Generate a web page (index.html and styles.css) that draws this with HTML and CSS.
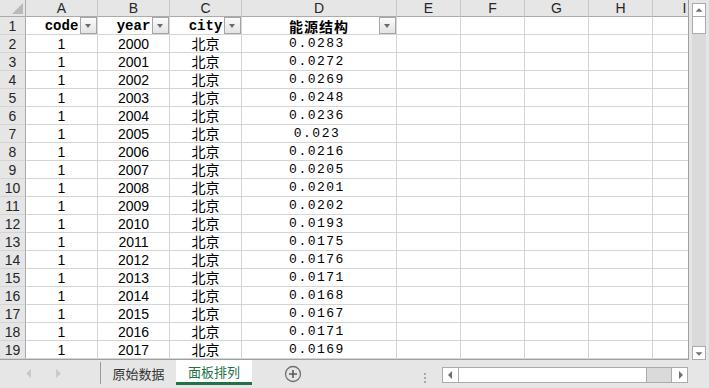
FILE: index.html
```html
<!DOCTYPE html>
<html>
<head>
  <title>面板排列</title>
  <link rel="stylesheet" href="styles.css">
</head>
<body>

  <div class="main">
    <div class="sheet">
      <div class="row cols">
        <span class="corner"><svg width="11" height="11" viewBox="0 0 11 11"><polygon points="11,0 11,11 0,11" fill="#b9b9b9"/></svg></span>
        <span>A</span><span>B</span><span>C</span><span>D</span><span>E</span><span>F</span><span>G</span><span>H</span><span>I</span>
      </div>
      <div class="row head">
        <span class="rh">1</span>
        <span class="mono">code<b class="filter"></b></span>
        <span class="mono">year<b class="filter"></b></span>
        <span class="mono">city<b class="filter"></b></span>
        <span class="cjk-bold">能源结构<b class="filter"></b></span>
        <i></i><i></i><i></i><i></i><i></i>
      </div>
      <div class="row"><span class="rh">2</span><span>1</span><span>2000</span><span class="cjk">北京</span><span class="num">0.0283</span><i></i><i></i><i></i><i></i><i></i></div>
      <div class="row"><span class="rh">3</span><span>1</span><span>2001</span><span class="cjk">北京</span><span class="num">0.0272</span><i></i><i></i><i></i><i></i><i></i></div>
      <div class="row"><span class="rh">4</span><span>1</span><span>2002</span><span class="cjk">北京</span><span class="num">0.0269</span><i></i><i></i><i></i><i></i><i></i></div>
      <div class="row"><span class="rh">5</span><span>1</span><span>2003</span><span class="cjk">北京</span><span class="num">0.0248</span><i></i><i></i><i></i><i></i><i></i></div>
      <div class="row"><span class="rh">6</span><span>1</span><span>2004</span><span class="cjk">北京</span><span class="num">0.0236</span><i></i><i></i><i></i><i></i><i></i></div>
      <div class="row"><span class="rh">7</span><span>1</span><span>2005</span><span class="cjk">北京</span><span class="num">0.023</span><i></i><i></i><i></i><i></i><i></i></div>
      <div class="row"><span class="rh">8</span><span>1</span><span>2006</span><span class="cjk">北京</span><span class="num">0.0216</span><i></i><i></i><i></i><i></i><i></i></div>
      <div class="row"><span class="rh">9</span><span>1</span><span>2007</span><span class="cjk">北京</span><span class="num">0.0205</span><i></i><i></i><i></i><i></i><i></i></div>
      <div class="row"><span class="rh">10</span><span>1</span><span>2008</span><span class="cjk">北京</span><span class="num">0.0201</span><i></i><i></i><i></i><i></i><i></i></div>
      <div class="row"><span class="rh">11</span><span>1</span><span>2009</span><span class="cjk">北京</span><span class="num">0.0202</span><i></i><i></i><i></i><i></i><i></i></div>
      <div class="row"><span class="rh">12</span><span>1</span><span>2010</span><span class="cjk">北京</span><span class="num">0.0193</span><i></i><i></i><i></i><i></i><i></i></div>
      <div class="row"><span class="rh">13</span><span>1</span><span>2011</span><span class="cjk">北京</span><span class="num">0.0175</span><i></i><i></i><i></i><i></i><i></i></div>
      <div class="row"><span class="rh">14</span><span>1</span><span>2012</span><span class="cjk">北京</span><span class="num">0.0176</span><i></i><i></i><i></i><i></i><i></i></div>
      <div class="row"><span class="rh">15</span><span>1</span><span>2013</span><span class="cjk">北京</span><span class="num">0.0171</span><i></i><i></i><i></i><i></i><i></i></div>
      <div class="row"><span class="rh">16</span><span>1</span><span>2014</span><span class="cjk">北京</span><span class="num">0.0168</span><i></i><i></i><i></i><i></i><i></i></div>
      <div class="row"><span class="rh">17</span><span>1</span><span>2015</span><span class="cjk">北京</span><span class="num">0.0167</span><i></i><i></i><i></i><i></i><i></i></div>
      <div class="row"><span class="rh">18</span><span>1</span><span>2016</span><span class="cjk">北京</span><span class="num">0.0171</span><i></i><i></i><i></i><i></i><i></i></div>
      <div class="row"><span class="rh">19</span><span>1</span><span>2017</span><span class="cjk">北京</span><span class="num">0.0169</span><i></i><i></i><i></i><i></i><i></i></div>
    </div>

    <div class="vscroll">
      <div class="sbtn"><svg width="14" height="13" viewBox="0 0 14 13"><polygon points="3,8 11,8 7,4" fill="#6f6f6f"/></svg></div>
      <div class="vthumb"></div>
      <div class="vtrack"></div>
      <div class="sbtn"><svg width="14" height="13" viewBox="0 0 14 13"><polygon points="3,5 11,5 7,9" fill="#6f6f6f"/></svg></div>
    </div>
  </div>

  <div class="tabbar">
    <div class="nav">
      <svg width="6" height="9" viewBox="0 0 6 9"><polygon points="5,0 5,9 0,4.5" fill="#c9c9c9"/></svg>
      <svg width="6" height="9" viewBox="0 0 6 9"><polygon points="1,0 1,9 6,4.5" fill="#c9c9c9"/></svg>
    </div>
    <div class="tab first">原始数据</div>
    <div class="tab active">面板排列</div>
    <div class="add">
      <svg width="18" height="18" viewBox="0 0 18 18">
        <circle cx="9" cy="9" r="7.5" fill="none" stroke="#707070" stroke-width="1.3"/>
        <path d="M9 5v8M5 9h8" stroke="#5a5a5a" stroke-width="1.6"/>
      </svg>
    </div>
    <div class="spacer"></div>
    <div class="dots">
      <svg width="3" height="11" viewBox="0 0 3 11"><rect x="0" y="0" width="2" height="2" fill="#a9a9a9"/><rect x="0" y="4" width="2" height="2" fill="#a9a9a9"/><rect x="0" y="8" width="2" height="2" fill="#a9a9a9"/></svg>
    </div>
    <div class="hscroll">
      <div class="hbtn"><svg width="14" height="14" viewBox="0 0 14 14"><polygon points="8,3 8,11 4,7" fill="#6f6f6f"/></svg></div>
      <div class="hthumb"></div>
      <div class="htrack"></div>
      <div class="hbtn"><svg width="14" height="14" viewBox="0 0 14 14"><polygon points="6,3 6,11 10,7" fill="#6f6f6f"/></svg></div>
    </div>
  </div>

</body>
</html>
```

FILE: styles.css
```css
* {
  box-sizing: border-box;
}

body {
  margin: 0;
  width: 709px;
  height: 388px;
  overflow: hidden;
  background-color: #e6e6e6;
  font-family: "Liberation Sans", Arial, sans-serif;
}

.main {
  display: flex;
  height: 360px;
}

/* grid of cells */
.sheet {
  width: 689px;
  height: 360px;
  overflow: hidden;
  background-color: white;
  border-right: 1px solid #a0a0a0;
  border-bottom: 1px solid #a0a0a0;
}

.row {
  display: grid;
  grid-template-columns: 26px 72px 72px 72px 155px 64px 64px 64px 64px 64px;
  height: 18px;
}

.row > * {
  position: relative;
  display: flex;
  align-items: center;
  justify-content: center;
  border-right: 1px solid #d4d4d4;
  border-bottom: 1px solid #d4d4d4;
  font-size: 14px;
  line-height: 16px;
  font-style: normal;
  color: #000;
  white-space: nowrap;
}

.cols {
  height: 17px;
  background-color: #e6e6e6;
}

.cols > * {
  border-right-color: #c8c8c8;
  border-bottom-color: #ababab;
  color: #262626;
}

.corner {
  align-items: flex-end !important;
  justify-content: flex-end !important;
  padding: 0 2px 2px 0;
  border-right-color: #ababab !important;
}

.rh {
  background-color: #e6e6e6;
  border-right-color: #ababab !important;
  color: #262626 !important;
}

.mono {
  font-family: "Liberation Mono", monospace;
  font-weight: bold;
  font-size: 14px;
}

.cjk {
  font-family: "Noto Sans CJK SC", sans-serif;
  padding-bottom: 1px;
}

.cjk-bold {
  font-family: "Noto Sans CJK SC", sans-serif;
  font-weight: bold;
  letter-spacing: 1px;
  font-size: 14px !important;
}

.num {
  font-family: "Liberation Mono", monospace;
  font-size: 13px !important;
  letter-spacing: 1.5px;
  padding-right: 4px;
}

.filter {
  position: absolute;
  top: 0;
  right: 0;
  width: 17px;
  height: 17px;
  border: 1px solid #a6a6a6;
  background: linear-gradient(#fbfbfb, #e3e3e3);
}

.filter::after {
  content: "";
  position: absolute;
  left: 4px;
  top: 6px;
  border-top: 4px solid #6b6b6b;
  border-left: 3.5px solid transparent;
  border-right: 3.5px solid transparent;
}

/* vertical scrollbar */
.vscroll {
  width: 20px;
  display: flex;
  flex-direction: column;
  padding: 3px 3px 0 3px;
}

.sbtn {
  height: 14px;
  background-color: white;
  border: 1px solid #ababab;
  display: flex;
}

.vthumb {
  height: 17px;
  background-color: white;
  border: 1px solid #ababab;
  border-top: none;
}

.vtrack {
  flex: 1;
  background-color: #dadada;
}

/* sheet tabs */
.tabbar {
  display: flex;
  align-items: flex-start;
  height: 28px;
  font-family: "Noto Sans CJK SC", sans-serif;
  font-size: 13px;
}

.nav {
  width: 100px;
  height: 26px;
  display: flex;
  align-items: center;
  gap: 23px;
  padding-left: 26px;
}

.tab {
  width: 76px;
  height: 25px;
  display: flex;
  align-items: center;
  justify-content: center;
  color: #333;
  padding-bottom: 2px;
}

.tab.first {
  border-left: 1px solid #9a9a9a;
  height: 22px;
  margin-top: 2px;
  padding-bottom: 0;
}

.tab.active {
  background-color: white;
  color: #217346;
  border-bottom: 3px solid #217346;
  padding-bottom: 0;
}

.add {
  margin: 5px 0 0 32px;
  height: 18px;
}

.spacer {
  flex: 1;
}

.dots {
  margin: 9px 15px 0 0;
  height: 11px;
}

.hscroll {
  display: flex;
  width: 246px;
  height: 16px;
  margin: 7px 21px 0 0;
  border: 1px solid #ababab;
}

.hbtn {
  width: 15px;
  background-color: white;
  display: flex;
  align-items: center;
  justify-content: center;
}

.hthumb {
  width: 189px;
  background-color: white;
  border-left: 1px solid #ababab;
  border-right: 1px solid #ababab;
}

.htrack {
  flex: 1;
  background-color: #dadada;
  border-right: 1px solid #ababab;
}
```
